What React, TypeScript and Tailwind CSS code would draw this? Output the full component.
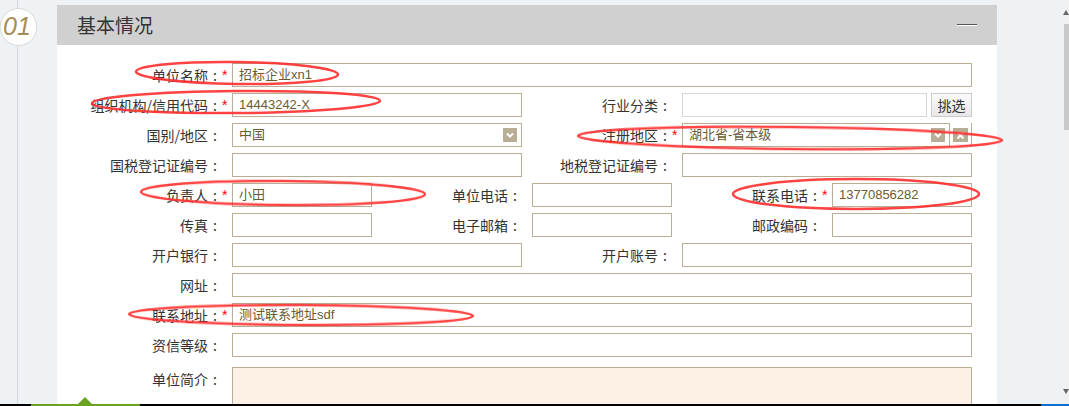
import React from 'react';

const font = { fontFamily: '"Liberation Sans", "Noto Sans CJK SC", sans-serif' };
const cjk = { fontFamily: '"Noto Sans CJK SC", "Liberation Sans", sans-serif' };

const Label: React.FC<{ text: string; w: string; req?: boolean }> = ({ text, w, req }) => (
  <div className={`${w} h-6 flex items-center justify-end text-[14px] text-[#333]`} style={cjk}>
    <span>{text}</span>
    <span className="w-[14px] text-center">:</span>
    <span className="w-[10px] text-left text-[#f00] text-[14px]" style={font}>{req ? '*' : ''}</span>
  </div>
);

const Input: React.FC<{ w: string; value?: string; light?: boolean; bg?: string }> = ({ w, value, light, bg }) => (
  <div
    className={`${w} h-6 border ${light ? 'border-[#d6d6d6]' : 'border-[#b8ae95]'} ${bg ?? 'bg-white'} px-[6px] flex items-center text-[13px] text-[#6b5a32] whitespace-nowrap overflow-hidden`}
  >
    {value}
  </div>
);

const Arrow = () => (
  <span className="w-[14px] h-[14px] bg-[#b8ae95] flex items-center justify-center">
    <svg width="10" height="10" viewBox="0 0 10 10">
      <path d="M2 3.5 L5 6.5 L8 3.5" stroke="#fff" strokeWidth="2" fill="none" />
    </svg>
  </span>
);

const Select: React.FC<{ w: string; value: string }> = ({ w, value }) => (
  <div className={`${w} h-6 border border-[#b8ae95] bg-white pl-[6px] pr-1 flex items-center justify-between text-[13px] text-[#6b5a32]`}>
    <span>{value}</span>
    <Arrow />
  </div>
);

export default function App() {
  return (
    <div className="relative w-[1069px] h-[406px] overflow-hidden bg-[#eef2f5] flex" style={font}>
      {/* left gutter */}
      <div className="relative w-[57px] shrink-0 h-full">
        <div className="absolute left-[17px] top-0 w-px h-full bg-[#d3d7db]" />
        <div className="absolute left-0 top-[8px] w-[37px] h-[38px] rounded-full bg-white border border-[#d8d8d8] flex items-center justify-center">
          <span className="text-[25px] italic text-[#a88c55] -ml-[3px]" style={{ fontFamily: '"Liberation Sans", sans-serif' }}>01</span>
        </div>
      </div>

      {/* panel */}
      <div className="w-[940px] mt-[5px] bg-white shrink-0 h-full">
        <div className="h-[40px] bg-[#d0d0d0] pl-5 pr-5 flex items-center justify-between">
          <span className="text-[19px] text-[#333]" style={cjk}>基本情况</span>
          <span className="w-[20px] h-[2px] border-t border-[#555] border-b border-b-[#fff]" />
        </div>
        <div className="pt-[18px] flex flex-col gap-[6px]">
          <div className="flex">
            <Label w="w-[175px]" text="单位名称" req />
            <Input w="w-[740px]" value="招标企业xn1" />
          </div>
          <div className="flex">
            <Label w="w-[175px]" text="组织机构/信用代码" req />
            <Input w="w-[290px]" value="14443242-X" />
            <Label w="w-[160px]" text="行业分类" />
            <Input w="w-[245px]" light />
            <button className="ml-[4px] w-[41px] h-6 border border-[#ccc] bg-gradient-to-b from-[#fafafa] to-[#e8e8e8] text-[14px] text-[#333]" style={cjk}>挑选</button>
          </div>
          <div className="flex">
            <Label w="w-[175px]" text="国别/地区" />
            <Select w="w-[290px]" value="中国" />
            <Label w="w-[160px]" text="注册地区" req />
            <Select w="w-[268px]" value="湖北省-省本级" />
            <div className="ml-[3px] w-[19px] h-6 border-r border-[#b8ae95] flex items-center">
              <span className="w-[15px] h-[14px] bg-[#b8ae95] flex items-center justify-center">
                <svg width="9" height="9" viewBox="0 0 9 9">
                  <path d="M1.5 1.5 L7.5 7.5 M7.5 1.5 L1.5 7.5" stroke="#fff" strokeWidth="2" />
                </svg>
              </span>
            </div>
          </div>
          <div className="flex">
            <Label w="w-[175px]" text="国税登记证编号" />
            <Input w="w-[290px]" />
            <Label w="w-[160px]" text="地税登记证编号" />
            <Input w="w-[290px]" />
          </div>
          <div className="flex">
            <Label w="w-[175px]" text="负责人" req />
            <Input w="w-[140px]" value="小田" />
            <Label w="w-[160px]" text="单位电话" />
            <Input w="w-[140px]" />
            <Label w="w-[160px]" text="联系电话" req />
            <Input w="w-[140px]" value="13770856282" />
          </div>
          <div className="flex">
            <Label w="w-[175px]" text="传真" />
            <Input w="w-[140px]" />
            <Label w="w-[160px]" text="电子邮箱" />
            <Input w="w-[140px]" />
            <Label w="w-[160px]" text="邮政编码" />
            <Input w="w-[140px]" />
          </div>
          <div className="flex">
            <Label w="w-[175px]" text="开户银行" />
            <Input w="w-[290px]" />
            <Label w="w-[160px]" text="开户账号" />
            <Input w="w-[290px]" />
          </div>
          <div className="flex">
            <Label w="w-[175px]" text="网址" />
            <Input w="w-[740px]" />
          </div>
          <div className="flex">
            <Label w="w-[175px]" text="联系地址" req />
            <Input w="w-[740px]" value="测试联系地址sdf" />
          </div>
          <div className="flex">
            <Label w="w-[175px]" text="资信等级" />
            <Input w="w-[740px]" />
          </div>
          <div className="flex mt-[4px] items-start">
            <Label w="w-[175px]" text="单位简介" />
            <div className="w-[740px] h-[60px] border border-[#b8ae95] bg-[#fdf1e6]" />
          </div>
        </div>
      </div>

      <div className="flex-1" />

      {/* scrollbar */}
      <div className="w-[7px] h-full bg-[#f0f0f0] relative">
        <svg className="absolute left-[1px] top-[10px]" width="6" height="5" viewBox="0 0 6 5">
          <path d="M0 5 L3 0 L6 5 Z" fill="#666" />
        </svg>
        <div className="absolute left-[2px] top-[24px] w-[5px] h-[106px] bg-[#c8c8c8]" />
        <svg className="absolute left-[1px] top-[389px]" width="6" height="5" viewBox="0 0 6 5">
          <path d="M0 0 L3 5 L6 0 Z" fill="#666" />
        </svg>
      </div>

      {/* bottom strip */}
      <div className="absolute left-0 bottom-0 w-full h-[2px] bg-black" />
      <div className="absolute left-[31px] bottom-0 w-[109px] h-[2px] bg-[#6aa321]" />
      <div className="absolute left-[78px] bottom-[2px] w-0 h-0 border-l-[7px] border-r-[7px] border-b-[7px] border-l-transparent border-r-transparent border-b-[#6aa321]" />
      <div className="absolute right-0 bottom-0 w-[28px] h-[2px] bg-[#0a6fcf]" />

      {/* red annotation ellipses */}
      <svg className="absolute left-0 top-0 pointer-events-none" width="1069" height="406">
        <g fill="none" stroke="#ff2d2d" strokeWidth="2.5" opacity="0.9">
          <ellipse cx="237" cy="73" rx="101" ry="11" transform="rotate(0.8 237 73)" />
          <ellipse cx="236" cy="102" rx="144" ry="11" transform="rotate(-0.5 236 102)" />
          <ellipse cx="790" cy="138" rx="212" ry="11" transform="rotate(0.6 790 138)" />
          <ellipse cx="283" cy="193" rx="142" ry="12" transform="rotate(0.5 283 193)" />
          <ellipse cx="856" cy="194" rx="123" ry="15" />
          <ellipse cx="301" cy="315" rx="172" ry="10" transform="rotate(0.3 301 315)" />
        </g>
      </svg>
    </div>
  );
}
